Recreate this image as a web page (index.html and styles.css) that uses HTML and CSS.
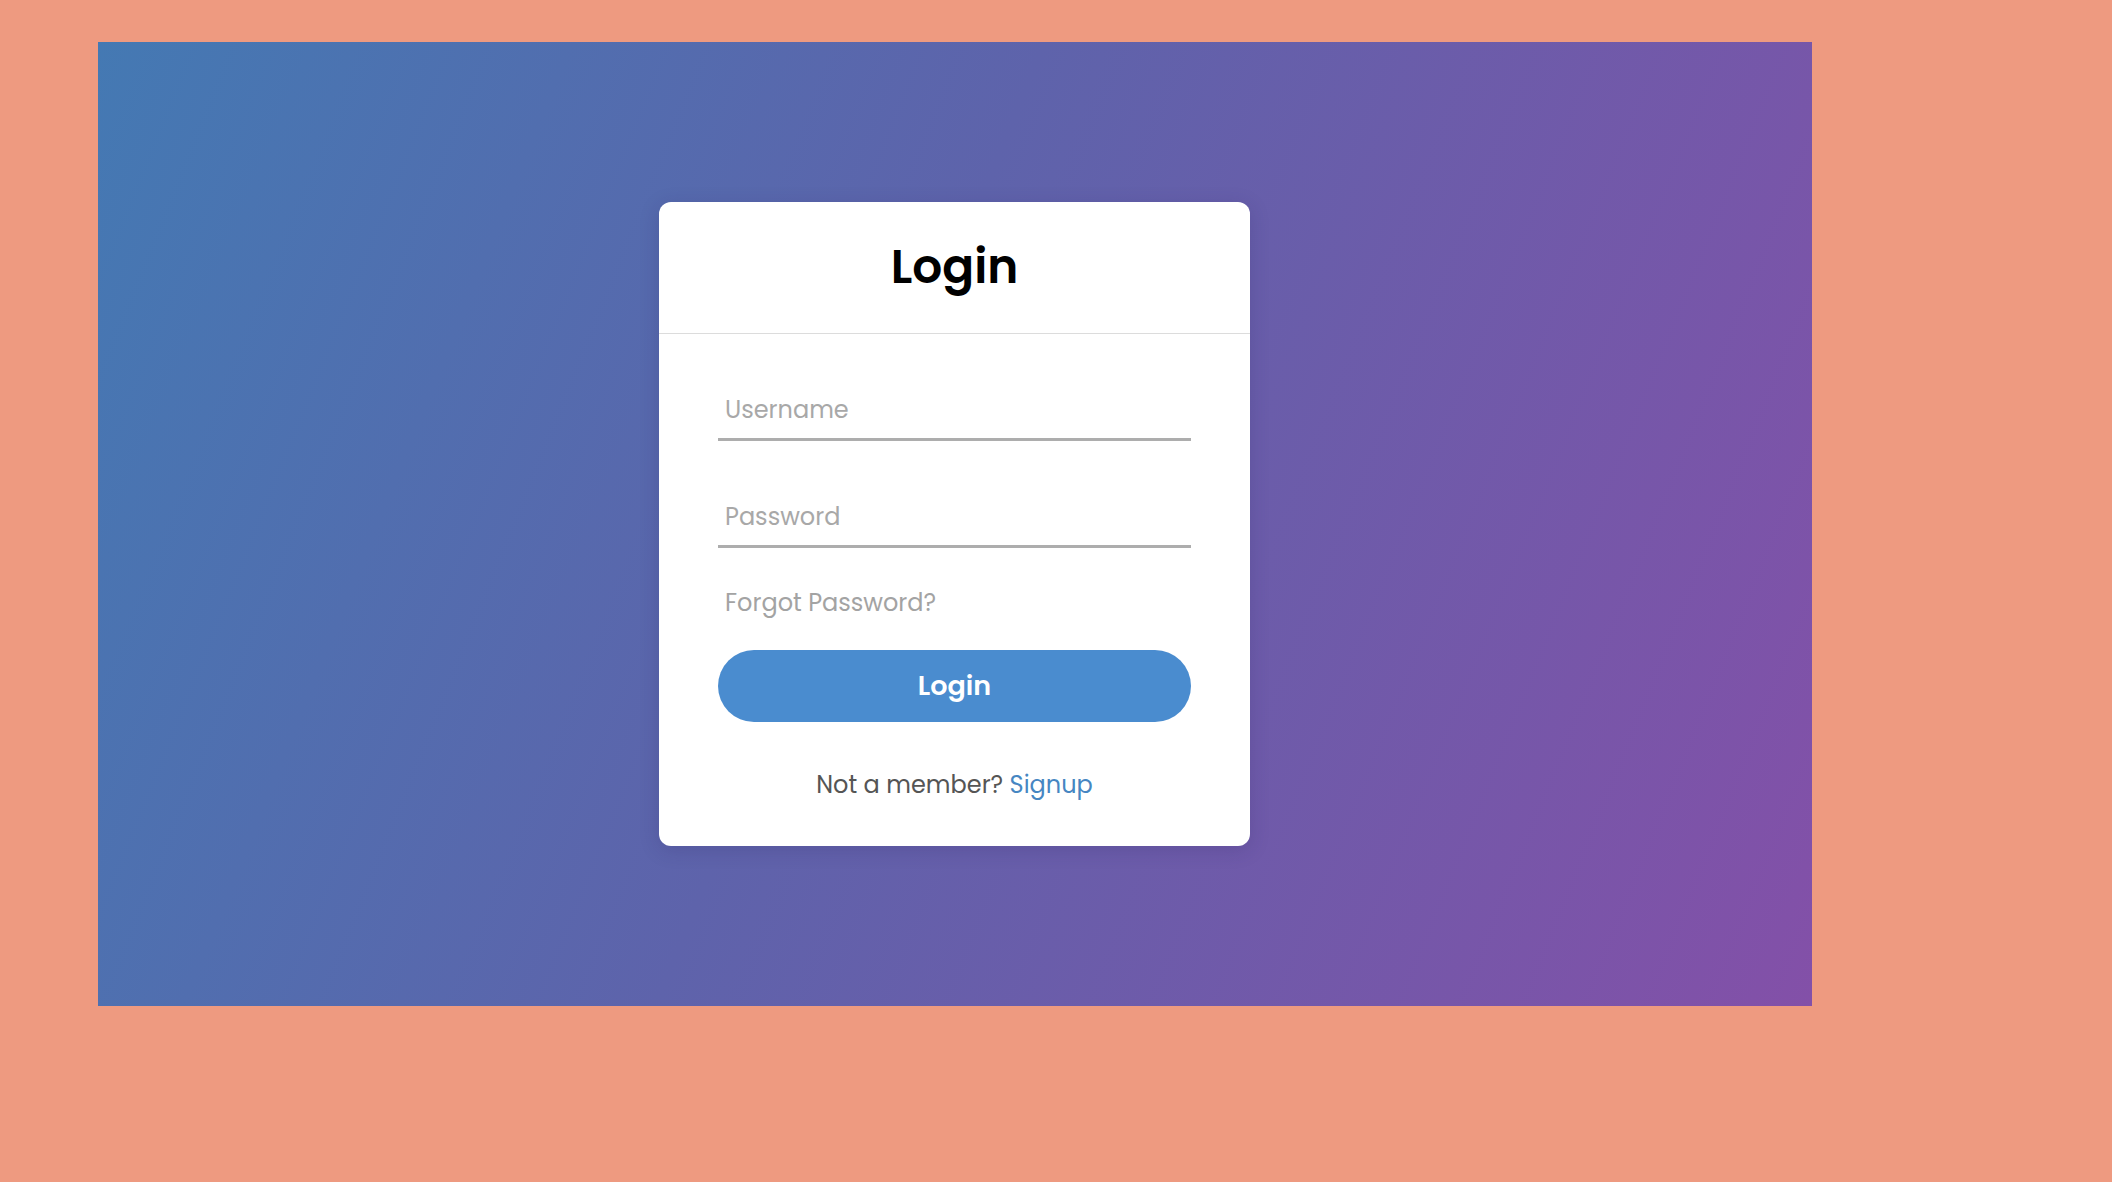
FILE: index.html
```html
<!DOCTYPE html>
<html lang="en">
<head>
<meta charset="utf-8">
<title>Login</title>
<link rel="stylesheet" href="styles.css">
</head>
<body>
  <div class="stage">
    <form class="card">
      <div class="card-head">
        <h1 class="title">Login</h1>
      </div>
      <div class="card-body">
        <div class="field"><span class="placeholder">Username</span></div>
        <div class="field"><span class="placeholder">Password</span></div>
        <div class="forgot">Forgot Password?</div>
        <div class="btn">Login</div>
        <div class="signup">Not a member? <span class="link">Signup</span></div>
      </div>
    </form>
  </div>
</body>
</html>
```
FILE: styles.css
```css
html, body {
  margin: 0;
  padding: 0;
}
body {
  background: #ee9a80;
  width: 2112px;
  height: 1182px;
  font-family: "Poppins", "Open Sans", "Noto Sans", sans-serif;
}
.stage {
  position: relative;
  margin-left: 98px;
  margin-top: 42px;
  width: 1714px;
  height: 964px;
  background: linear-gradient(112deg, #4479b3 0%, #5e63ab 45%, #8350a8 100%);
  display: flex;
  justify-content: center;
  align-items: flex-start;
  box-sizing: border-box;
  padding-top: 160px;
  padding-right: 1px;
}
.card {
  width: 591px;
  height: 644px;
  background: #fff;
  border-radius: 12px;
  box-shadow: 0 4px 20px rgba(40, 30, 90, 0.18);
  box-sizing: border-box;
  display: flex;
  flex-direction: column;
}
.card-head {
  height: 132px;
  border-bottom: 1px solid #dcdcdc;
  display: flex;
  justify-content: center;
  align-items: center;
  box-sizing: border-box;
}
.title {
  margin: 0;
  font-size: 47px;
  font-weight: 600;
  color: #000;
  padding-bottom: 1px;
}
.card-body {
  padding: 0 59px;
  display: flex;
  flex-direction: column;
}
.field {
  height: 60px;
  border-bottom: 3px solid #adadad;
  display: flex;
  align-items: center;
  padding-left: 7px;
  margin-top: 44px;
}
.field + .field {
  margin-top: 44px;
}
.placeholder {
  font-size: 24px;
  color: #a8a8a8;
  padding-top: 2px;
}
.forgot {
  font-size: 24px;
  color: #a3a3a3;
  padding-left: 7px;
  margin-top: 38px;
  height: 33px;
  line-height: 33px;
}
.btn {
  margin-top: 31px;
  height: 72px;
  border-radius: 36px;
  background: #4a8ccf;
  color: #fff;
  font-size: 27px;
  font-weight: 600;
  display: flex;
  align-items: center;
  justify-content: center;
}
.signup {
  margin-top: 45px;
  text-align: center;
  font-size: 24px;
  color: #555;
}
.link {
  color: #4686c2;
}
```
